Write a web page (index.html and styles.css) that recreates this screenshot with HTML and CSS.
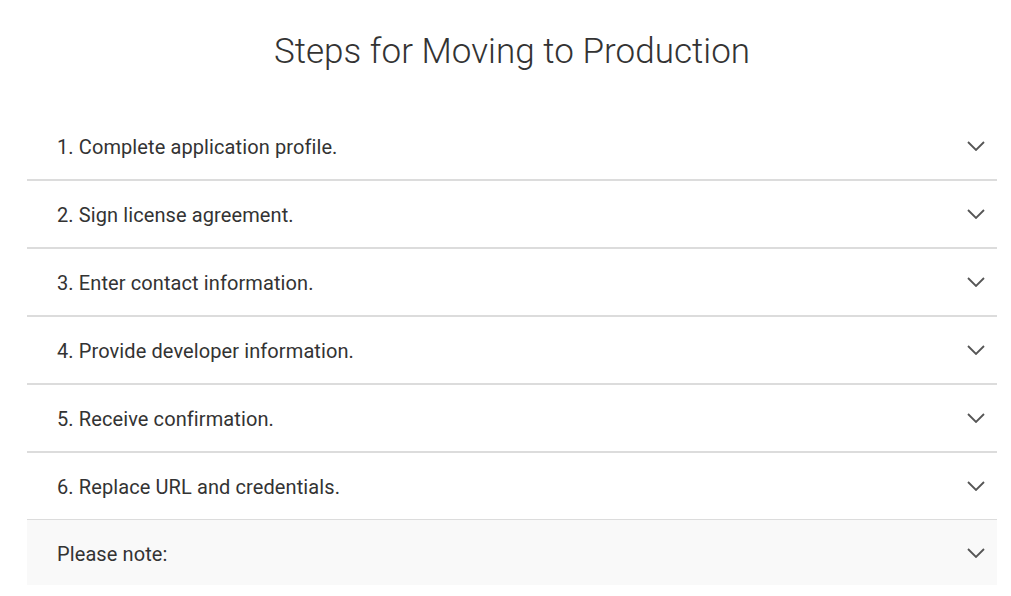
FILE: index.html
```html
<!DOCTYPE html>
<html>
<head>
<meta charset="utf-8">
<link rel="stylesheet" href="styles.css">
</head>
<body>
<div class="page">
  <h1 class="title">Steps for Moving to Production</h1>
  <ul class="accordion">
    <li class="item"><span class="label">1. Complete application profile.</span><svg class="chev" viewBox="0 0 18 10"><path d="M1 1 L9 9 L17 1"/></svg></li>
    <li class="item"><span class="label">2. Sign license agreement.</span><svg class="chev" viewBox="0 0 18 10"><path d="M1 1 L9 9 L17 1"/></svg></li>
    <li class="item"><span class="label">3. Enter contact information.</span><svg class="chev" viewBox="0 0 18 10"><path d="M1 1 L9 9 L17 1"/></svg></li>
    <li class="item"><span class="label">4. Provide developer information.</span><svg class="chev" viewBox="0 0 18 10"><path d="M1 1 L9 9 L17 1"/></svg></li>
    <li class="item"><span class="label">5. Receive confirmation.</span><svg class="chev" viewBox="0 0 18 10"><path d="M1 1 L9 9 L17 1"/></svg></li>
    <li class="item last"><span class="label">6. Replace URL and credentials.</span><svg class="chev" viewBox="0 0 18 10"><path d="M1 1 L9 9 L17 1"/></svg></li>
    <li class="item note"><span class="label">Please note:</span><svg class="chev" viewBox="0 0 18 10"><path d="M1 1 L9 9 L17 1"/></svg></li>
  </ul>
</div>
</body>
</html>
```

FILE: styles.css
```css
html, body {
  margin: 0;
  padding: 0;
  background: #fff;
}
body {
  font-family: Roboto, "Liberation Sans", sans-serif;
  color: #333;
}
.page {
  padding: 0 14px 0 27px;
}
.title {
  margin: 0;
  padding-top: 29px;
  height: 113px;
  box-sizing: border-box;
  text-align: center;
  font-weight: 300;
  font-size: 35px;
  line-height: 46px;
  letter-spacing: 0.03px;
  color: #333;
}
.accordion {
  list-style: none;
  margin: 0;
  padding: 0;
}
.item {
  display: flex;
  align-items: center;
  justify-content: space-between;
  height: 66px;
  padding: 0 12px 0 30px;
  border-bottom: 2px solid #dcdcdc;
  font-size: 20px;
  letter-spacing: 0.1px;
}
.item .label {
  padding-top: 2px;
}
.item.last {
  border-bottom-width: 1px;
}
.item.note {
  border-bottom: none;
  height: 65px;
  background: #f9f9f9;
}
.chev {
  width: 18px;
  height: 10px;
  fill: none;
  stroke: #555;
  stroke-width: 1.8;
}
```
